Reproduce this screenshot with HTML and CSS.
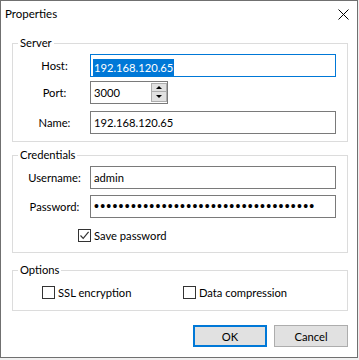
FILE: index.html
```html
<!DOCTYPE html>
<html lang="en">
<head>
    <meta charset="UTF-8">
    <meta name="viewport" content="width=device-width, initial-scale=1.0">
    <title>Properties</title>
    <link rel="stylesheet" href="styles.css">
</head>
<body>
    <div class="window">
        <div class="titlebar">
            <span class="title">Properties</span>
            <svg class="close" width="11" height="11" viewBox="0 0 11 11">
                <path d="M0.5 0.5 L10.5 10.5 M10.5 0.5 L0.5 10.5" stroke="#000" stroke-width="1"/>
            </svg>
        </div>

        <fieldset class="group server">
            <legend>Server</legend>
            <div class="form-row">
                <label>Host:</label>
                <div class="field focused"><span class="selected">192.168.120.65</span></div>
            </div>
            <div class="form-row port-row">
                <label>Port:</label>
                <div class="field spin">
                    <span>3000</span>
                    <div class="spin-buttons">
                        <span class="spin-btn up"><i class="arrow-up"></i></span>
                        <span class="spin-btn down"><i class="arrow-down"></i></span>
                    </div>
                </div>
            </div>
            <div class="form-row name-row">
                <label>Name:</label>
                <div class="field">192.168.120.65</div>
            </div>
        </fieldset>

        <fieldset class="group credentials">
            <legend>Credentials</legend>
            <div class="form-row">
                <label>Username:</label>
                <div class="field">admin</div>
            </div>
            <div class="form-row password-row">
                <label>Password:</label>
                <div class="field"><span class="dots">••••••••••••••••••••••••••••••••••••</span></div>
            </div>
            <div class="check save-row">
                <span class="box">
                    <svg width="11" height="11" viewBox="0 0 11 11">
                        <path d="M1.5 5.5 L4.2 8.3 L9.6 1.8" fill="none" stroke="#333" stroke-width="1.2"/>
                    </svg>
                </span>
                <span>Save password</span>
            </div>
        </fieldset>

        <fieldset class="group options">
            <legend>Options</legend>
            <div class="options-row">
                <div class="check ssl"><span class="box"></span><span>SSL encryption</span></div>
                <div class="check"><span class="box"></span><span>Data compression</span></div>
            </div>
        </fieldset>

        <div class="buttons">
            <button class="btn default">OK</button>
            <button class="btn">Cancel</button>
        </div>
    </div>
</body>
</html>
```

FILE: styles.css
```css
* {
    box-sizing: border-box;
}

body {
    margin: 0;
    background: #f0f0f0;
    font-family: Lato, "Noto Sans", sans-serif;
    font-size: 11.2px;
    color: #000;
}

.window {
    width: 358px;
    height: 358px;
    background: #fff;
    border: 1px solid #707070;
    display: flex;
    flex-direction: column;
}

.titlebar {
    height: 30px;
    display: flex;
    justify-content: space-between;
    align-items: flex-start;
    padding: 5px 0 0 4px;
}

.title {
    font-size: 11.5px;
    line-height: 16px;
}

.close {
    margin: 3px 8px 0 0;
}

/* group boxes */
.group {
    margin: 4px 9px 0 11px;
    padding: 3px 0 7px 0;
    border: 1px solid #dcdcdc;
    min-width: 0;
}

.group legend {
    padding: 0 2px;
    margin-left: 5px;
    line-height: 16px;
}

.credentials {
    margin-top: 5px;
    padding-bottom: 9px;
}

.options {
    margin-top: 9px;
    padding: 6px 0 10px 0;
}

.form-row {
    display: grid;
    grid-template-columns: 71px 246px;
    align-items: center;
    padding-left: 6px;
    height: 23px;
}

.form-row label {
    text-align: center;
}

.port-row {
    margin-top: 4px;
}

.name-row {
    margin-top: 7px;
}

.password-row {
    margin-top: 6px;
}

.field {
    height: 23px;
    border: 1px solid #7a7a7a;
    padding: 0 3px;
    line-height: 21px;
    white-space: nowrap;
    overflow: hidden;
}

.field.focused {
    border-color: #0078d7;
    padding-left: 2px;
}

.selected {
    display: inline-block;
    background: #0078d7;
    color: #fff;
    line-height: 17px;
    padding: 0 1px;
    vertical-align: middle;
}

.dots {
    font-family: "Liberation Sans", sans-serif;
    font-size: 14px;
    letter-spacing: 1.25px;
}

/* spinner */
.spin {
    width: 78px;
    display: flex;
    justify-content: space-between;
    padding-right: 0;
}

.spin-buttons {
    display: flex;
    flex-direction: column;
    width: 16px;
    margin-top: 1px;
}

.spin-btn {
    display: flex;
    align-items: center;
    justify-content: center;
    border: 1px solid #adadad;
    background: #e1e1e1;
}

.spin-btn.up {
    height: 9px;
}

.spin-btn.down {
    height: 10px;
    border-top: none;
}

.arrow-up {
    border-left: 3px solid transparent;
    border-right: 3px solid transparent;
    border-bottom: 3px solid #000;
}

.arrow-down {
    border-left: 3px solid transparent;
    border-right: 3px solid transparent;
    border-top: 3px solid #000;
}

/* checkboxes */
.check {
    display: flex;
    align-items: center;
    gap: 3px;
    height: 16px;
}

.box {
    width: 13px;
    height: 13px;
    border: 1px solid #333;
    background: #fff;
    display: flex;
}

.save-row {
    margin-top: 9px;
    padding-left: 65px;
}

.options-row {
    display: grid;
    grid-template-columns: 141px auto;
    padding-left: 29px;
}

/* dialog buttons */
.buttons {
    display: flex;
    justify-content: flex-end;
    gap: 7px;
    margin: 14px 9px 0 0;
}

.btn {
    width: 74px;
    height: 22px;
    padding: 0;
    border: 1px solid #adadad;
    background: #e1e1e1;
    font: inherit;
    color: #000;
}

.btn.default {
    border: 2px solid #0078d7;
}
```
